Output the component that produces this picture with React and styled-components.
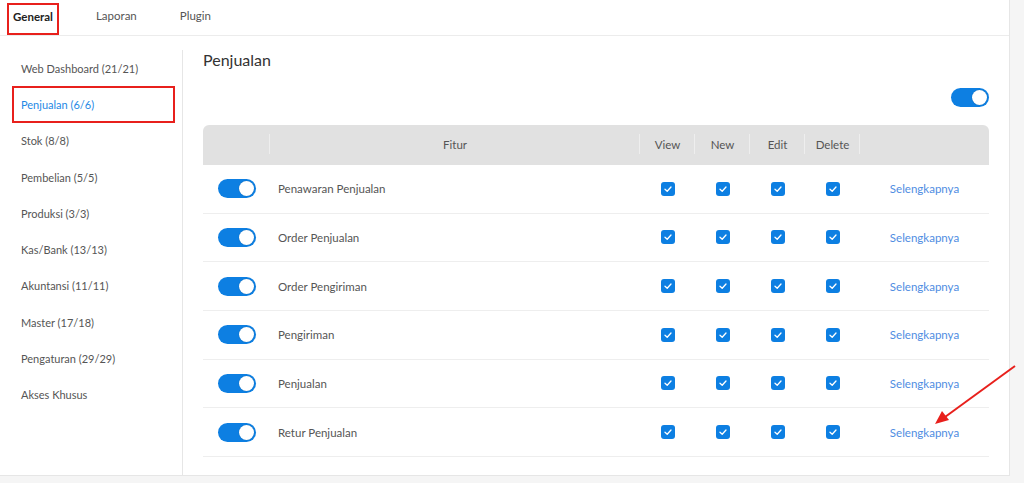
import React from 'react'
import styled, { createGlobalStyle } from 'styled-components'

const GlobalStyle = createGlobalStyle`
    body {
        margin: 0;
        background: #f5f5f5;
        font-family: Lato, "Liberation Sans", sans-serif;
    }
`

const tabs = ['General', 'Laporan', 'Plugin']

const menu = [
    'Web Dashboard (21/21)',
    'Penjualan (6/6)',
    'Stok (8/8)',
    'Pembelian (5/5)',
    'Produksi (3/3)',
    'Kas/Bank (13/13)',
    'Akuntansi (11/11)',
    'Master (17/18)',
    'Pengaturan (29/29)',
    'Akses Khusus',
]

const features = [
    'Penawaran Penjualan',
    'Order Penjualan',
    'Order Pengiriman',
    'Pengiriman',
    'Penjualan',
    'Retur Penjualan',
]

const Check = () => (
    <CheckBox>
        <svg width="10" height="10" viewBox="0 0 10 10">
            <path d="M2 5.2 L4.2 7.2 L8 3" fill="none" stroke="#fff" strokeWidth="1.3" strokeLinecap="round" strokeLinejoin="round" />
        </svg>
    </CheckBox>
)

const App = () => {
    return (
        <Page>
            <GlobalStyle />
            <TabBar>
                {tabs.map((t, i) => (
                    <Tab key={t} $active={i === 0}>{t}</Tab>
                ))}
            </TabBar>
            <Body>
                <Sidebar>
                    {menu.map((m, i) => (
                        <MenuItem key={m} $active={i === 1}>{m}</MenuItem>
                    ))}
                </Sidebar>
                <Content>
                    <Title>Penjualan</Title>
                    <TopToggle>
                        <Toggle />
                    </TopToggle>
                    <Table>
                        <HeadRow>
                            <HeadCell $sep />
                            <HeadCell $sep>Fitur</HeadCell>
                            <HeadCell $sep>View</HeadCell>
                            <HeadCell $sep>New</HeadCell>
                            <HeadCell $sep>Edit</HeadCell>
                            <HeadCell $sep>Delete</HeadCell>
                            <HeadCell />
                        </HeadRow>
                        {features.map((f) => (
                            <Row key={f}>
                                <Cell><Toggle /></Cell>
                                <Cell $left>{f}</Cell>
                                <Cell><Check /></Cell>
                                <Cell><Check /></Cell>
                                <Cell><Check /></Cell>
                                <Cell><Check /></Cell>
                                <Cell><More>Selengkapnya</More></Cell>
                            </Row>
                        ))}
                    </Table>
                </Content>
            </Body>
            <Arrow width="90" height="70" viewBox="0 0 90 70">
                <line x1="84" y1="4" x2="14" y2="55" stroke="#e8201c" strokeWidth="2" />
                <polygon points="4,62 11,49 18,58" fill="#e8201c" />
            </Arrow>
        </Page>
    )
}

export default App

const Page = styled.div`
    position: relative;
    width: 1010px;
    height: 476px;
    box-sizing: border-box;
    background: #fff;
    border-right: 1px solid #e6e6e6;
    border-bottom: 1px solid #e6e6e6;
    display: flex;
    flex-direction: column;
`
const TabBar = styled.div`
    display: flex;
    gap: 31px;
    height: 36px;
    box-sizing: border-box;
    padding: 3px 0 0 7px;
    border-bottom: 1px solid #ececec;
`
const Tab = styled.div`
    display: flex;
    align-items: center;
    box-sizing: border-box;
    height: 32px;
    padding: 0 4px 6px;
    font-size: 11.5px;
    color: ${(p) => (p.$active ? '#222' : '#555')};
    font-weight: ${(p) => (p.$active ? 700 : 400)};
    border: 2px solid ${(p) => (p.$active ? '#e8201c' : 'transparent')};
    border-top-width: ${(p) => (p.$active ? '2px' : '0')};
`
const Body = styled.div`
    display: flex;
    flex: 1;
`
const Sidebar = styled.div`
    width: 183px;
    box-sizing: border-box;
    margin-top: 14px;
    border-right: 1px solid #e6e6e6;
    display: flex;
    flex-direction: column;
`
const MenuItem = styled.div`
    height: 36.3px;
    box-sizing: border-box;
    margin: 0 7px 0 12px;
    padding-left: 7px;
    display: flex;
    align-items: center;
    font-size: 11px;
    color: ${(p) => (p.$active ? '#1e88e5' : '#555')};
    border: 2px solid ${(p) => (p.$active ? '#e8201c' : 'transparent')};
`
const Content = styled.div`
    flex: 1;
    padding: 14px 20px 0 20px;
    display: flex;
    flex-direction: column;
`
const Title = styled.div`
    font-size: 16px;
    color: #333;
    height: 20px;
    line-height: 20px;
`
const TopToggle = styled.div`
    display: flex;
    justify-content: flex-end;
    margin: 18px 0 18px;
`
const Toggle = styled.div`
    width: 38px;
    height: 19px;
    border-radius: 10px;
    background: #0d7fe2;
    position: relative;
    flex-shrink: 0;
    &::after {
        content: '';
        position: absolute;
        right: 2px;
        top: 2px;
        width: 15px;
        height: 15px;
        border-radius: 50%;
        background: #fff;
        box-shadow: 0 0 1px rgba(0, 0, 0, 0.3);
    }
`
const Table = styled.div`
    width: 786px;
    display: flex;
    flex-direction: column;
`
const cols = '67px 370px 55px 55px 55px 55px 129px'
const HeadRow = styled.div`
    display: grid;
    grid-template-columns: ${cols};
    height: 40px;
    padding-bottom: 2px;
    box-sizing: border-box;
    background: #e1e1e1;
    border-radius: 6px 6px 0 0;
`
const HeadCell = styled.div`
    position: relative;
    display: flex;
    align-items: center;
    justify-content: center;
    font-size: 11.5px;
    color: #555;
    &::after {
        content: '';
        display: ${(p) => (p.$sep ? 'block' : 'none')};
        position: absolute;
        right: 0;
        top: 9px;
        height: 20px;
        border-right: 1px solid #eeeeee;
    }
`
const Row = styled.div`
    display: grid;
    grid-template-columns: ${cols};
    height: 48.67px;
    box-sizing: border-box;
    border-bottom: 1px solid #eeeeee;
`
const Cell = styled.div`
    display: flex;
    align-items: center;
    justify-content: ${(p) => (p.$left ? 'flex-start' : 'center')};
    padding-left: ${(p) => (p.$left ? '8px' : '0')};
    font-size: 11.5px;
    color: #555;
`
const CheckBox = styled.div`
    width: 14px;
    height: 14px;
    border-radius: 3px;
    background: #0d7fe2;
    display: flex;
    align-items: center;
    justify-content: center;
`
const More = styled.span`
    font-size: 11.5px;
    color: #4f8de2;
`
const Arrow = styled.svg`
    position: absolute;
    left: 931px;
    top: 362px;
`
